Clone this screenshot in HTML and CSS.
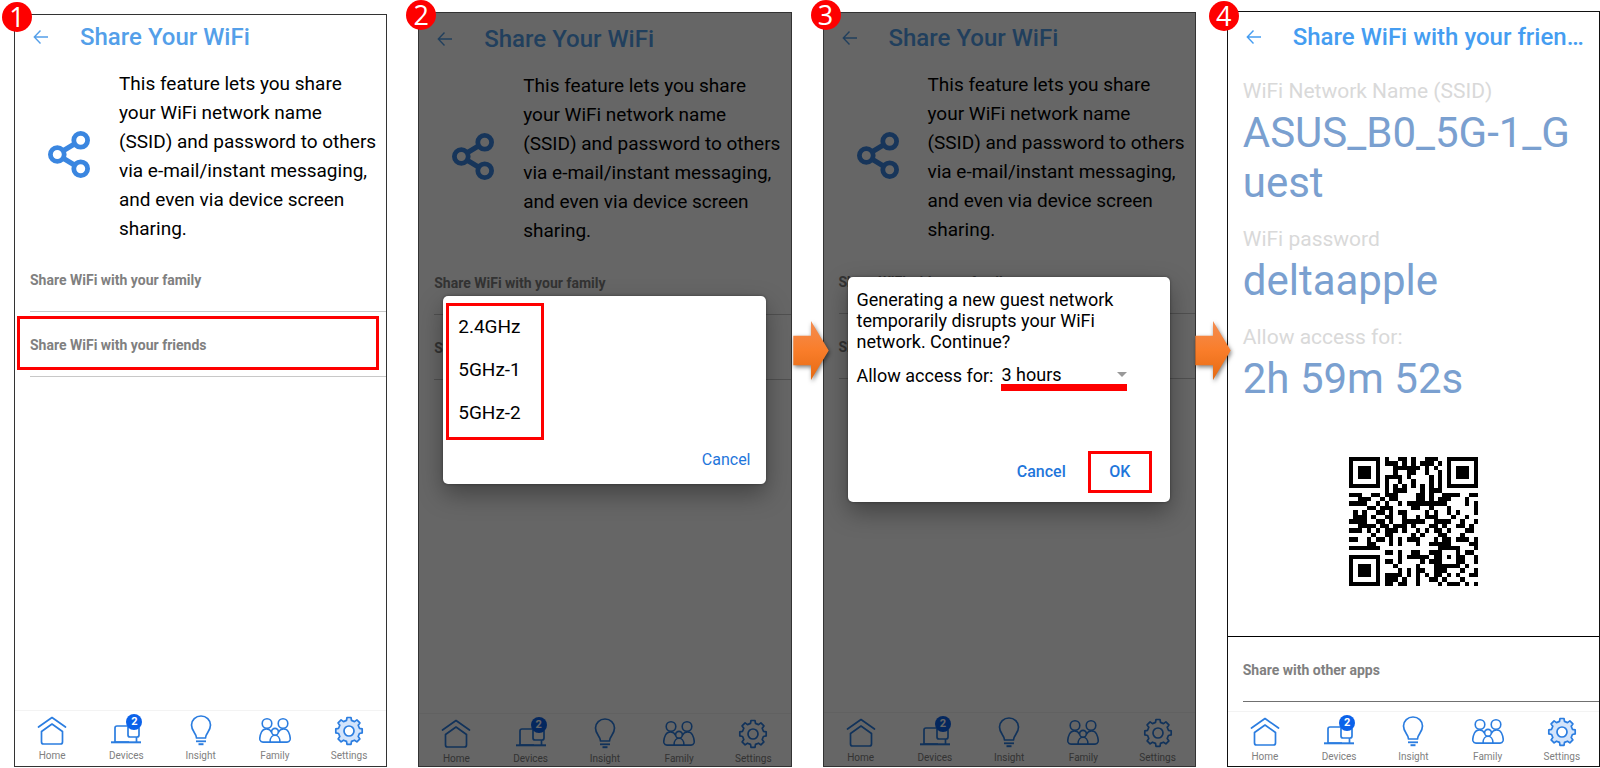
FILE: index.html
```html
<!DOCTYPE html>
<html lang="en">
<head>
<meta charset="utf-8">
<title>Share Your WiFi</title>
<link rel="stylesheet" href="styles.css">
</head>
<body>
<svg class="sprite" aria-hidden="true">
  <symbol id="i-back" viewBox="0 0 16 16"><path d="M15 8H1.500M7.500 1.500 1.300 8l6.200 6.500" fill="none" stroke="currentColor" stroke-width="1.400"/></symbol>
  <symbol id="i-share" viewBox="0 0 42 47"><path d="M9 23.500 33 9M9 23.500 33 38" stroke="currentColor" stroke-width="5"/><g fill="var(--hole)" stroke="currentColor" stroke-width="4.800"><circle cx="9.300" cy="23.500" r="6.900"/><circle cx="32.700" cy="9.300" r="6.900"/><circle cx="32.700" cy="37.700" r="6.900"/></g></symbol>
  <symbol id="i-home" viewBox="0 0 32 32"><g fill="none" stroke="currentColor" stroke-width="1.700" stroke-linejoin="round" stroke-linecap="round"><path d="M2.500 12 16 2.500 29.500 12"/><path d="M5.500 16.500 16 9l10.500 7.500V27a2 2 0 0 1-2 2h-17a2 2 0 0 1-2-2z"/></g></symbol>
  <symbol id="i-devices" viewBox="0 0 32 32"><g fill="none" stroke="currentColor" stroke-width="1.700" stroke-linejoin="round"><path d="M19 27H5V13q0-2 2-2h10"/><path d="M1 27.300h30" stroke-width="2"/><path d="M18 11v9q0 2 2 2h7q2 0 2-2v-7M26.500 22v5"/></g></symbol>
  <symbol id="i-insight" viewBox="0 0 32 32"><g fill="none" stroke="currentColor" stroke-width="1.700"><path d="M11.500 23c0-5-5-6.500-5-13a9.500 9 0 0 1 19 0c0 6.500-5 8-5 13z" stroke-linejoin="round"/><path d="M11 26.300h10" stroke-width="1.800"/><path d="M13.500 29.200h5" stroke-width="2"/></g></symbol>
  <symbol id="i-family" viewBox="0 0 32 32"><g fill="none" stroke="currentColor" stroke-width="1.600"><circle cx="8" cy="8.500" r="4.800"/><circle cx="24" cy="8.500" r="4.800"/><circle cx="16" cy="16.800" r="3.400"/><path d="M11 27c0-9 10-9 10 0M12.700 17.500C10.500 13 4.500 13 2.500 17 .8 20.500.5 23 1 25q.8 2 3 2.100h24q2.200-.1 3-2.100c.5-2 .2-4.500-1.500-8-2-4-8-4-10.200.5"/></g></symbol>
  <symbol id="i-settings" viewBox="0 0 32 32"><g stroke="currentColor" stroke-width="1.700" stroke-linejoin="round"><path fill="var(--tint)" d="M13.500 5.400 14 2.500h4l.5 2.900 3 1.200 2.400-1.700 3 3-1.700 2.400 1.200 3 2.800.6v4l-2.800.6-1.200 3 1.700 2.400-3 3-2.400-1.700-3 1.200-.5 2.900h-4l-.5-2.900-3-1.200-2.400 1.700-3-3 1.700-2.400-1.200-3-2.800-.6v-4l2.800-.6 1.200-3-1.700-2.400 3-3 2.400 1.700z"/><circle cx="16" cy="16" r="5" fill="var(--hole)"/></g></symbol>
  <symbol id="i-arrow" viewBox="0 0 36 60"><path d="M0 15h18V0l18 30-18 30V45H0z" fill="url(#flame)"/></symbol>
  <defs><linearGradient id="flame" x1="0" y1="0" x2="0" y2="1"><stop offset="0" stop-color="#f38d52"/><stop offset=".5" stop-color="#f97d2a"/><stop offset="1" stop-color="#e56a12"/></linearGradient></defs>
</svg>

<main class="steps">
  <section class="phone phone--first">
    <span class="step">1</span>
    <header class="bar"><button class="back" aria-label="Back"><svg><use href="#i-back"/></svg></button><h2 class="title">Share Your WiFi</h2></header>
    <div class="intro"><svg class="share"><use href="#i-share"/></svg><p>This feature lets you share your WiFi network name (SSID) and password to others via e-mail/instant messaging, and even via device screen sharing.</p></div>
    <ul class="rows"><li><button class="row">Share WiFi with your family</button></li><li class="marked"><button class="row">Share WiFi with your friends</button></li></ul>
    <nav class="tabs">
      <a href="#home"><svg><use href="#i-home"/></svg>Home</a>
      <a href="#devices"><svg><use href="#i-devices"/></svg>Devices<span class="count">2</span></a>
      <a href="#insight"><svg><use href="#i-insight"/></svg>Insight</a>
      <a href="#family"><svg><use href="#i-family"/></svg>Family</a>
      <a href="#settings"><svg><use href="#i-settings"/></svg>Settings</a>
    </nav>
  </section>

  <section class="phone phone--second">
    <header class="bar"><button class="back" aria-label="Back"><svg><use href="#i-back"/></svg></button><h2 class="title">Share Your WiFi</h2></header>
    <div class="intro"><svg class="share"><use href="#i-share"/></svg><p>This feature lets you share your WiFi network name (SSID) and password to others via e-mail/instant messaging, and even via device screen sharing.</p></div>
    <ul class="rows"><li><button class="row">Share WiFi with your family</button></li><li><button class="row">Share WiFi with your friends</button></li></ul>
    <nav class="tabs">
      <a href="#home"><svg><use href="#i-home"/></svg>Home</a>
      <a href="#devices"><svg><use href="#i-devices"/></svg>Devices<span class="count">2</span></a>
      <a href="#insight"><svg><use href="#i-insight"/></svg>Insight</a>
      <a href="#family"><svg><use href="#i-family"/></svg>Family</a>
      <a href="#settings"><svg><use href="#i-settings"/></svg>Settings</a>
    </nav>
    <div class="shade">
      <div class="dialog" role="dialog" aria-label="Choose a band">
        <ul class="bands"><li><button>2.4GHz</button></li><li><button>5GHz-1</button></li><li><button>5GHz-2</button></li></ul>
        <div class="actions actions--bands"><button>Cancel</button></div>
      </div>
    </div>
    <span class="step">2</span>
    <svg class="next"><use href="#i-arrow"/></svg>
  </section>

  <section class="phone phone--third">
    <header class="bar"><button class="back" aria-label="Back"><svg><use href="#i-back"/></svg></button><h2 class="title">Share Your WiFi</h2></header>
    <div class="intro"><svg class="share"><use href="#i-share"/></svg><p>This feature lets you share your WiFi network name (SSID) and password to others via e-mail/instant messaging, and even via device screen sharing.</p></div>
    <ul class="rows"><li><button class="row">Share WiFi with your family</button></li><li><button class="row">Share WiFi with your friends</button></li></ul>
    <nav class="tabs">
      <a href="#home"><svg><use href="#i-home"/></svg>Home</a>
      <a href="#devices"><svg><use href="#i-devices"/></svg>Devices<span class="count">2</span></a>
      <a href="#insight"><svg><use href="#i-insight"/></svg>Insight</a>
      <a href="#family"><svg><use href="#i-family"/></svg>Family</a>
      <a href="#settings"><svg><use href="#i-settings"/></svg>Settings</a>
    </nav>
    <div class="shade">
      <div class="dialog" role="dialog" aria-label="New guest network">
        <p class="message">Generating a new guest network temporarily disrupts your WiFi network. Continue?</p>
        <div class="field"><label for="hours">Allow access for:</label><span class="picker"><select id="hours"><option>3 hours</option></select></span></div>
        <div class="actions actions--confirm"><button>Cancel</button><button class="ok">OK</button></div>
      </div>
    </div>
    <span class="step">3</span>
    <svg class="next"><use href="#i-arrow"/></svg>
  </section>

  <section class="phone phone--fourth">
    <span class="step">4</span>
    <header class="bar"><button class="back" aria-label="Back"><svg><use href="#i-back"/></svg></button><h2 class="title">Share WiFi with your friends</h2></header>
    <dl class="details">
      <div><dt>WiFi Network Name (SSID)</dt><dd>ASUS_B0_5G-1_Guest</dd></div>
      <div><dt>WiFi password</dt><dd>deltaapple</dd></div>
      <div><dt>Allow access for:</dt><dd>2h 59m 52s</dd></div>
    </dl>
    <svg class="qr" id="qr" viewBox="0 0 29 29" shape-rendering="crispEdges" role="img" aria-label="WiFi QR code"></svg>
    <ul class="rows rows--dark"><li><button class="row">Share with other apps</button></li></ul>
    <nav class="tabs">
      <a href="#home"><svg><use href="#i-home"/></svg>Home</a>
      <a href="#devices"><svg><use href="#i-devices"/></svg>Devices<span class="count">2</span></a>
      <a href="#insight"><svg><use href="#i-insight"/></svg>Insight</a>
      <a href="#family"><svg><use href="#i-family"/></svg>Family</a>
      <a href="#settings"><svg><use href="#i-settings"/></svg>Settings</a>
    </nav>
  </section>
</main>
<script src="qr.js"></script>
</body>
</html>
```

FILE: styles.css
```css
* { box-sizing: border-box; }
body { margin: 0; background: #fff; font-family: Roboto, "Liberation Sans", sans-serif; color: #000; }
h2, p, ul, dl, dd { margin: 0; padding: 0; }
ul { list-style: none; }
button, select { font: inherit; color: inherit; background: none; border: 0; margin: 0; padding: 0; text-align: left; }
svg { display: block; }
.sprite { position: absolute; width: 0; height: 0; }

.steps { display: grid; grid-template-columns: repeat(4, minmax(0, 1fr)); gap: 31px; min-height: 100vh; padding: 12px 0 1px 14px; }
.phone { --hole: #fff; --tint: #d3e4fb; position: relative; display: flex; flex-direction: column; border: 1px solid #333; padding-top: 4px; }
.phone--first { margin-top: 2px; padding: 0 0 3px; }
.phone--second, .phone--third { --tint: transparent; }
.phone--third { padding: 3px 0 1px; }
.phone--fourth { margin-top: -1px; padding: 3px 0 2px; border-color: #111; }

.step { position: absolute; left: -13px; top: -13px; width: 30px; height: 30px; border-radius: 50%; background: #fe0000; color: #fff; font: 27px/29px "Open Sans", sans-serif; text-align: center; }
.phone--fourth .step { left: -19px; top: -11px; }
.next { position: absolute; right: -38px; top: 308px; width: 36px; height: 59px; z-index: 2; filter: drop-shadow(1px 2px 2px rgba(0, 0, 0, .5)); }
.phone--third .next { right: -36px; }

.bar { display: flex; align-items: center; height: 44px; padding: 0 8px 0 18px; color: #549fe9; }
.back { flex: none; width: 16px; height: 16px; margin-right: 31px; }
.back svg { width: 16px; height: 16px; }
.title { font-size: 24px; font-weight: 500; line-height: 32px; white-space: nowrap; overflow: hidden; text-overflow: ellipsis; }
.phone--fourth .bar { color: #459df1; }

.intro { display: flex; align-items: center; padding: 10px 8px 0 33px; }
.share { flex: none; width: 42px; height: 47px; margin: 0 29px 4px 0; color: #3a86e0; }
.intro p { font-size: 19px; line-height: 29px; }
.rows { margin: 5px 0 0 15px; }
.phone--first .rows { margin-top: 4px; }
.rows li { position: relative; border-bottom: 1px solid #c8c8c8; }
.row { display: block; width: 100%; height: 64px; padding-top: 2px; font-size: 14px; font-weight: 700; color: #808080; }
.marked::after { content: ""; position: absolute; inset: 4px 7px 6px -13px; border: 3px solid #fe0000; pointer-events: none; }
.phone .rows--dark { margin: 50px 0 0; padding-left: 15px; border-top: 1px solid #000; }
.rows--dark li { border-color: #707070; }

.tabs { display: grid; grid-template-columns: repeat(5, 1fr); margin-top: auto; padding-top: 4px; border-top: 1px solid #f3f3f3; }
.tabs a { position: relative; display: flex; flex-direction: column; align-items: center; gap: 2px; font-size: 10px; line-height: 14px; color: #808080; text-decoration: none; }
.tabs svg { width: 32px; height: 32px; color: #2b7de0; }
.count { position: absolute; left: 50%; top: -1px; width: 16px; height: 16px; border-radius: 50%; background: #0b62ea; color: #fff; font-size: 11px; font-weight: 700; line-height: 16px; text-align: center; }

.shade { position: absolute; inset: 0; display: flex; flex-direction: column; justify-content: center; padding: 0 25px 0 24px; background: rgba(0, 0, 0, .6); }
.dialog { background: #fff; border-radius: 5px; font-size: 18px; box-shadow: 0 10px 24px rgba(0, 0, 0, .35), 0 0 3px rgba(0, 0, 0, .4); }
.bands { display: flex; flex-direction: column; gap: 21px; width: 98px; margin: 7px 0 0 3px; padding: 10px 0 13px 9px; border: 3px solid #fe0000; font-size: 19px; }
.bands button { display: block; line-height: 22px; }
.actions { display: flex; justify-content: flex-end; align-items: center; font-size: 16px; line-height: 24px; color: #1f76db; }
.actions--bands { padding: 8px 15px 12px; }
.message { padding: 12px 12px 0 9px; line-height: 21px; }
.field { display: flex; align-items: center; gap: 8px; margin: 8px 0 0 9px; line-height: 24px; }
.picker { position: relative; width: 126px; border-bottom: 7px solid #fe0000; margin-top: 6px; }
.picker select { display: block; width: 100%; height: 18px; line-height: 18px; appearance: none; }
.picker::after { content: ""; position: absolute; right: 0; top: 6px; border: 5px solid transparent; border-top: 5px solid #999; border-bottom: 0; }
.actions--confirm { gap: 22px; padding: 60px 18px 9px; font-weight: 500; }
.ok { width: 64px; height: 42px; border: 3px solid #fe0000; text-align: center; }

.details { display: flex; flex-direction: column; gap: 18px; padding: 19px 16px 0 15px; }
.details dt { font-size: 21px; line-height: 26px; margin-bottom: 4px; color: #d9d9d9; }
.details dd { font-size: 42px; line-height: 50px; color: #7aa0d0; word-break: break-all; }
.qr { width: 129px; height: 129px; margin: 53px auto 0; }
```

FILE: qr.js
```
// Version 3, level L QR code, mask 1.
function encode(text) {
  const bits = [];
  const push = (v, n) => { while (n--) bits.push((v >> n) & 1); };
  push(4, 4);
  push(text.length, 8);
  for (const c of text) push(c.charCodeAt(0), 8);
  push(0, 4);
  const words = [];
  for (let i = 0; i < bits.length; i += 8) words.push(parseInt(bits.slice(i, i + 8).join(""), 2));
  for (let pad = 0xec; words.length < 55; pad ^= 0xfd) words.push(pad);

  const mul = (a, b) => { let r = 0; for (; b; b >>= 1) { if (b & 1) r ^= a; a = (a << 1) ^ (a & 128 ? 0x11d : 0); } return r; };
  let gen = [1];
  for (let i = 0, root = 1; i < 15; i++, root = mul(root, 2)) {
    const g = gen.concat(0);
    gen.forEach((v, k) => { g[k + 1] ^= mul(v, root); });
    gen = g;
  }
  const rem = words.concat(Array(15).fill(0));
  for (let i = 0; i < 55; i++) {
    const f = rem[i];
    gen.forEach((v, k) => { rem[i + k] ^= mul(v, f); });
  }
  return words.concat(rem.slice(55));
}

function build(text) {
  const n = 29;
  const m = Array.from({ length: n }, () => Array(n).fill(null));
  const ring = (cy, cx, r, on) => {
    for (let y = -r; y <= r; y++) for (let x = -r; x <= r; x++) {
      if (m[cy + y] && cx + x >= 0 && cx + x < n) m[cy + y][cx + x] = on(Math.max(Math.abs(x), Math.abs(y)));
    }
  };
  for (const [y, x] of [[3, 3], [3, 25], [25, 3]]) ring(y, x, 4, d => +(d !== 2 && d !== 4));
  ring(22, 22, 2, d => +(d !== 1));
  for (let i = 8; i < n - 8; i++) m[6][i] = m[i][6] = 1 - i % 2;
  m[21][8] = 1;
  const format = 0b111001011110011;
  for (let i = 0; i < 15; i++) {
    const b = (format >> i) & 1;
    if (i < 6) m[i][8] = b; else if (i < 8) m[i + 1][8] = b; else if (i === 8) m[8][7] = b; else m[8][14 - i] = b;
    if (i < 8) m[8][n - 1 - i] = b; else m[n - 15 + i][8] = b;
  }
  const words = encode(text);
  let k = 0, up = true;
  for (let col = n - 1; col > 0; col -= 2) {
    if (col === 6) col--;
    for (let j = 0; j < n; j++) {
      const y = up ? n - 1 - j : j;
      for (const x of [col, col - 1]) {
        if (m[y][x] !== null) continue;
        const bit = k < 560 ? (words[k >> 3] >> (7 - k % 8)) & 1 : 0;
        k++;
        m[y][x] = bit ^ (y % 2 === 0 ? 1 : 0);
      }
    }
    up = !up;
  }
  return m;
}

function draw(svg, text) {
  const d = build(text).map((row, y) => row.map((v, x) => v ? `M${x} ${y}h1v1h-1z` : "").join("")).join("");
  svg.innerHTML = `<path d="${d}"/>`;
}

draw(document.getElementById("qr"), "WIFI:T:WPA;S:ASUS_B0_5G-1_Guest;P:deltaapple;;");
```
